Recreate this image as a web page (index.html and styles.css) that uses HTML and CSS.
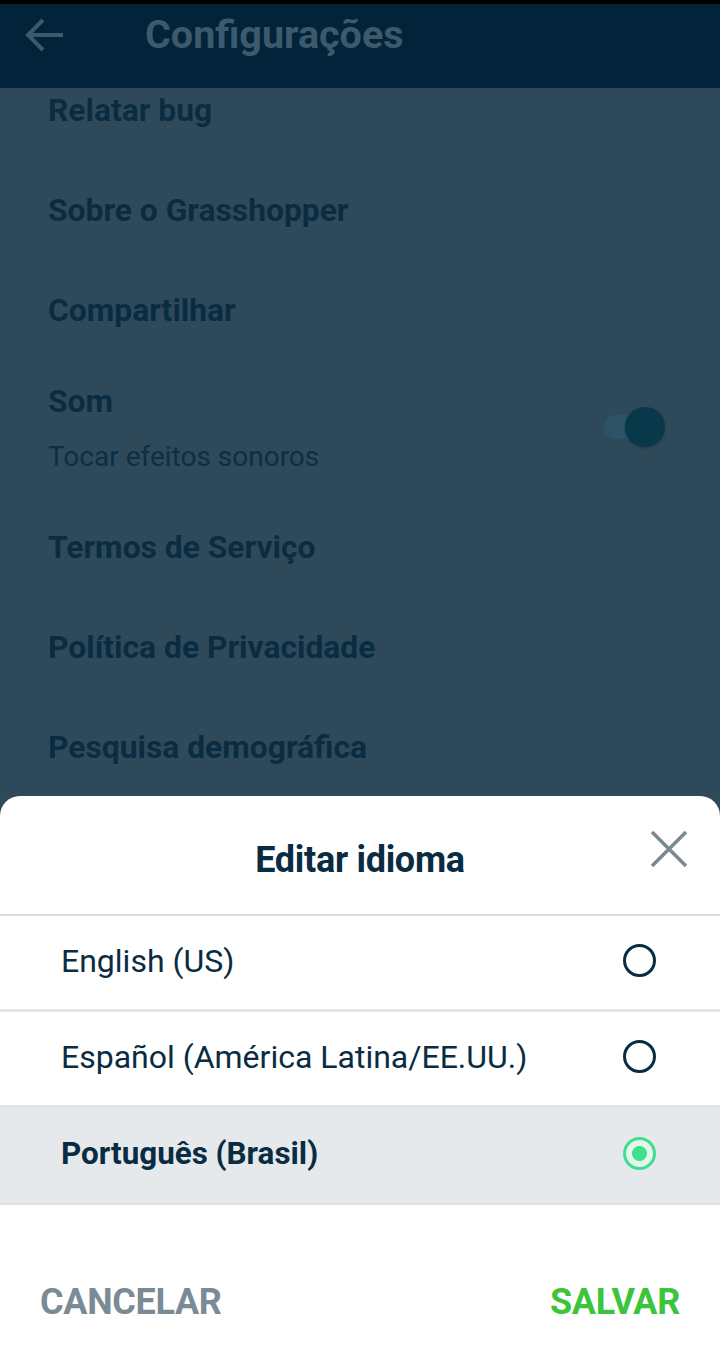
FILE: index.html
```html
<!DOCTYPE html>
<html lang="pt-BR">
<head>
<meta charset="utf-8">
<link rel="stylesheet" href="styles.css">
</head>
<body>
<div class="screen">
  <header class="appbar">
    <svg class="back" width="44" height="44" viewBox="0 0 44 44"><path d="M40 22H6M20 7L5 22l15 15" fill="none" stroke="#3b5a6b" stroke-width="4" stroke-linecap="butt"/></svg>
    <h1 class="appbar-title">Configurações</h1>
  </header>
  <main class="settings">
    <div class="item item-top">Relatar bug</div>
    <div class="item">Sobre o Grasshopper</div>
    <div class="item">Compartilhar</div>
    <div class="item item-toggle">
      <div class="toggle-text">
        <div class="toggle-title">Som</div>
        <div class="sub">Tocar efeitos sonoros</div>
      </div>
      <div class="switch"><span class="track"></span><span class="thumb"></span></div>
    </div>
    <div class="item">Termos de Serviço</div>
    <div class="item">Política de Privacidade</div>
    <div class="item">Pesquisa demográfica</div>
  </main>
  <section class="sheet">
    <div class="sheet-head">
      <h2 class="sheet-title">Editar idioma</h2>
      <svg class="close" width="38" height="38" viewBox="0 0 38 38"><path d="M2 2L36 36M36 2L2 36" stroke="#7b8a91" stroke-width="3.6"/></svg>
    </div>
    <div class="opt">
      <span>English (US)</span>
      <span class="radio"></span>
    </div>
    <div class="opt">
      <span>Español (América Latina/EE.UU.)</span>
      <span class="radio"></span>
    </div>
    <div class="opt opt-selected">
      <span>Português (Brasil)</span>
      <span class="radio radio-on"></span>
    </div>
    <div class="actions">
      <span class="btn btn-cancel">CANCELAR</span>
      <span class="btn btn-save">SALVAR</span>
    </div>
  </section>
</div>
</body>
</html>
```

FILE: styles.css
```css
* { box-sizing: border-box; margin: 0; padding: 0; }
html, body { width: 720px; height: 1365px; overflow: hidden; }
body { font-family: Roboto, "Noto Sans", sans-serif; background: #2e4a5a; }
.screen { position: relative; width: 720px; height: 1365px; overflow: hidden; background: #2e4a5a; }

.appbar {
  height: 88px;
  background: #03233a;
  border-top: 4px solid #000;
  display: flex;
  align-items: center;
  padding-left: 23px;
  padding-bottom: 22px;
}
.back { flex: none; }
.appbar-title {
  margin-left: 78px;
  font-size: 39.5px;
  line-height: 44px;
  font-weight: 700;
  color: #3b5a6b;
}

.settings { display: flex; flex-direction: column; padding-left: 48px; padding-right: 50px; }
.item {
  height: 100px;
  display: flex;
  align-items: center;
  font-size: 31.8px;
  font-weight: 700;
  color: #0a2c42;
}
.item-top { height: 72px; align-items: flex-start; line-height: 44px; }
.item-toggle { height: 137px; justify-content: space-between; align-items: flex-start; padding-top: 22px; }
.toggle-text { display: flex; flex-direction: column; gap: 20px; }
.toggle-title { line-height: 38px; }
.sub { font-size: 28px; line-height: 34px; font-weight: 400; color: #0d2e44; }
.switch { position: relative; width: 70px; height: 44px; margin-top: 23px; }
.track { position: absolute; left: 4px; top: 10px; width: 54px; height: 24px; border-radius: 12px; background: #2c5466; }
.thumb { position: absolute; left: 25px; top: 2px; width: 40px; height: 40px; border-radius: 50%; background: #07394a; box-shadow: 0 1px 3px rgba(0,0,0,0.25); }

.sheet {
  position: absolute;
  left: 0; right: 0; top: 796px; bottom: 0;
  background: #fff;
  border-radius: 20px 20px 0 0;
  display: flex;
  flex-direction: column;
}
.sheet-head {
  position: relative;
  height: 120px;
  border-bottom: 2px solid #dcdfe1;
  display: flex;
  align-items: center;
  justify-content: center;
}
.sheet-title { font-size: 36px; font-weight: 700; color: #0a2c42; margin-top: 10px; letter-spacing: -0.3px; }
.close { position: absolute; right: 32px; top: 34px; }
.opt {
  height: 96px;
  display: flex;
  align-items: center;
  justify-content: space-between;
  padding-left: 61px;
  padding-right: 64px;
  padding-bottom: 4px;
  font-size: 32px;
  color: #0a2c42;
  border-bottom: 3px solid #e3e5e7;
}
.opt-selected { background: #e6e9ec; font-weight: 700; font-size: 31.4px; height: 97px; border-bottom: 2px solid #dfe2e4; }
.radio {
  width: 33px; height: 33px;
  border: 3px solid #0a2c42;
  border-radius: 50%;
  flex: none;
}
.radio-on {
  border-color: #3fe08d;
  background: radial-gradient(circle, #3fe08d 0 7px, #e9f3ee 8px);
}
.actions {
  flex: 1;
  display: flex;
  justify-content: space-between;
  align-items: center;
  padding: 34px 40px 0 40px;
}
.btn { font-size: 36px; font-weight: 700; letter-spacing: -0.3px; }
.btn-cancel { color: #7b8b95; }
.btn-save { color: #3cc43b; }
```
